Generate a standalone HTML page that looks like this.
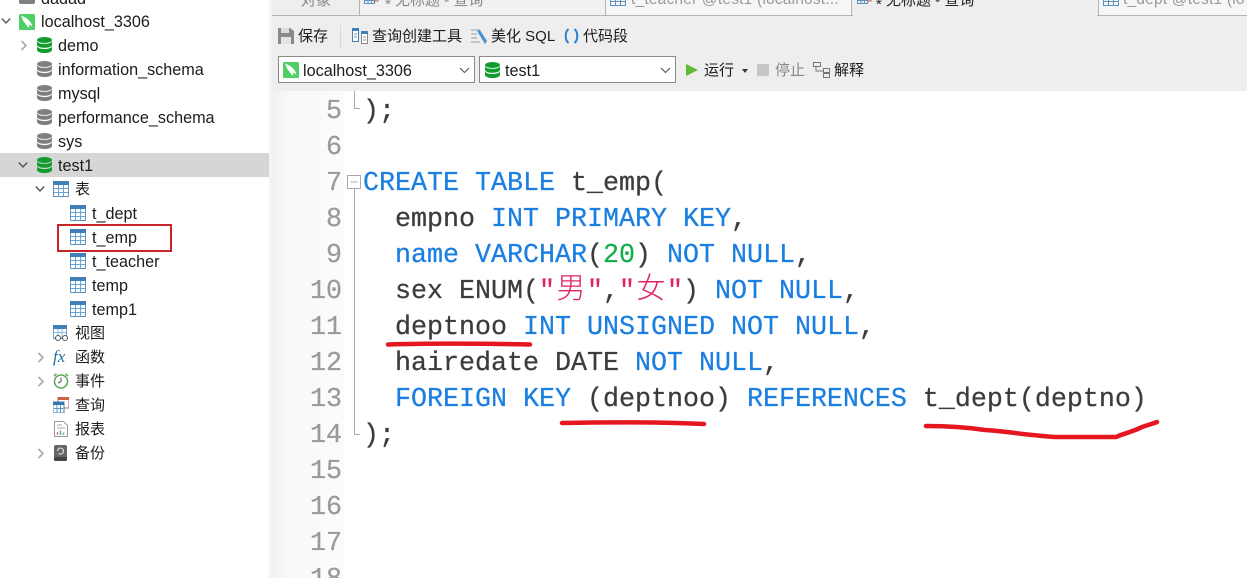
<!DOCTYPE html>
<html lang="zh"><head><meta charset="utf-8"><title>SQL</title>
<style>
html,body{margin:0;padding:0;width:1247px;height:578px;overflow:hidden;background:#fff}
#r{position:relative;width:1247px;height:578px;overflow:hidden;font-family:"Liberation Sans","Noto Sans CJK SC",sans-serif;color:#1c1c1c}
.a,.t,.c,.n,svg.i{position:absolute}
.t{font-size:16.2px;line-height:20px;white-space:nowrap;height:20px}
.z{font-size:15px}
.s{position:relative;top:4px}
.c{left:363px;height:36px;line-height:36px;font-family:"Liberation Mono","Noto Sans CJK SC",monospace;font-size:26.67px;white-space:pre;color:#3c3c3c;-webkit-text-stroke:.25px currentColor}
.c b{font-weight:normal;color:#1a7fe0}
.c i{font-style:normal;color:#e0245e}
.c u{text-decoration:none;color:#12b04c}
.c .k{display:inline-block;width:32px;height:20px;text-align:center;font-size:29px;line-height:20px;vertical-align:baseline;-webkit-text-stroke:0;font-family:"Noto Sans CJK SC",sans-serif;font-weight:300}
.n{left:280px;width:62px;text-align:right;height:36px;line-height:36px;font-family:"Liberation Mono",monospace;font-size:26.67px;color:#9a9a9a;-webkit-text-stroke:.25px #9a9a9a}
.combo{position:absolute;top:56px;height:27px;background:#fff;border:1px solid #8a8a8a;box-sizing:border-box}
</style></head><body><div id="r">
<svg width="0" height="0" style="position:absolute"><defs>
<symbol id="db" viewBox="0 0 15 16"><ellipse cx="7.500" cy="3" rx="7.500" ry="3"/><path d="M0 4.200c1 1.900 3.800 2.600 7.500 2.600S14 6.100 15 4.200V8c-.6 1.800-3.600 2.800-7.500 2.800S.6 9.800 0 8z"/><path d="M0 9.400c1 1.900 3.800 2.600 7.500 2.600s6.500-.7 7.500-2.600V13c-.6 2-3.600 3-7.500 3S.6 15 0 13z"/></symbol>
<symbol id="tb" viewBox="0 0 16 16"><rect x=".5" y=".5" width="15" height="15" fill="#fff" stroke="#5b93c4"/><rect x="0" y="0" width="16" height="4" fill="#3f80b8"/><path d="M5.500 4v11M10.500 4v11M1 7.500h14M1 11.500h14" stroke="#6fa3cf" fill="none"/></symbol>
<symbol id="ms" viewBox="0 0 16 16"><rect width="16" height="16" rx="1.500" fill="#4fd065"/><path d="M2.500 1.500C5 3 8 4 10 6.500c1 1.300 2.500 2.800 3.500 6-1.500-.8-2.700-1.500-3.700-2.200.2 1.500.2 2.500.7 3.700C8 12.500 7 10.500 6 9 4.500 7.500 2.800 5 2.500 1.500z" fill="#fff"/></symbol>
</defs></svg>

<!-- sidebar -->
<div class="a" style="left:269px;top:0;width:3px;height:578px;background:#f4f4f4"></div>
<div class="a" style="left:0;top:153px;width:269px;height:24px;background:#d6d6d6"></div>

<svg class="i" style="left:19px;top:-6px" width="16" height="10" viewBox="0 0 16 10"><rect width="16" height="10" rx="2" fill="#808080"/></svg>
<div class="t" style="left:41px;top:-11px">dadad</div>
<svg class="i" style="left:1px;top:17px" width="10" height="8" viewBox="0 0 10 8"><path d="M.8 1.500 5 6 9.200 1.500" fill="none" stroke="#555" stroke-width="1.300"/></svg>
<svg class="i" style="left:19px;top:14px" width="16" height="16"><use href="#ms"/></svg>
<div class="t" style="left:41px;top:12px">localhost_3306</div>

<svg class="i" style="left:20px;top:40px" width="8" height="11" viewBox="0 0 8 11"><path d="M1.500 1 6 5.500 1.500 10" fill="none" stroke="#aaa" stroke-width="1.600"/></svg>
<svg class="i" style="left:37px;top:37px;fill:#129c2e" width="15" height="16"><use href="#db"/></svg>
<div class="t" style="left:58px;top:36px">demo</div>
<svg class="i" style="left:37px;top:61px;fill:#7f7f7f" width="15" height="16"><use href="#db"/></svg>
<div class="t" style="left:58px;top:60px">information_schema</div>
<svg class="i" style="left:37px;top:85px;fill:#7f7f7f" width="15" height="16"><use href="#db"/></svg>
<div class="t" style="left:58px;top:84px">mysql</div>
<svg class="i" style="left:37px;top:109px;fill:#7f7f7f" width="15" height="16"><use href="#db"/></svg>
<div class="t" style="left:58px;top:108px">performance_schema</div>
<svg class="i" style="left:37px;top:133px;fill:#7f7f7f" width="15" height="16"><use href="#db"/></svg>
<div class="t" style="left:58px;top:132px">sys</div>
<svg class="i" style="left:18px;top:161px" width="10" height="8" viewBox="0 0 10 8"><path d="M.8 1.500 5 6 9.200 1.500" fill="none" stroke="#555" stroke-width="1.400"/></svg>
<svg class="i" style="left:37px;top:157px;fill:#129c2e" width="15" height="16"><use href="#db"/></svg>
<div class="t" style="left:58px;top:156px">test1</div>

<svg class="i" style="left:35px;top:185px" width="10" height="8" viewBox="0 0 10 8"><path d="M.8 1.500 5 6 9.200 1.500" fill="none" stroke="#555" stroke-width="1.400"/></svg>
<svg class="i" style="left:53px;top:181px" width="16" height="16"><use href="#tb"/></svg>
<div class="t z" style="left:75px;top:180px">表</div>

<svg class="i" style="left:70px;top:205px" width="16" height="16"><use href="#tb"/></svg>
<div class="t" style="left:92px;top:204px">t_dept</div>
<svg class="i" style="left:70px;top:229px" width="16" height="16"><use href="#tb"/></svg>
<div class="t" style="left:92px;top:228px">t_emp</div>
<svg class="i" style="left:70px;top:253px" width="16" height="16"><use href="#tb"/></svg>
<div class="t" style="left:92px;top:252px">t_teacher</div>
<svg class="i" style="left:70px;top:277px" width="16" height="16"><use href="#tb"/></svg>
<div class="t" style="left:92px;top:276px">temp</div>
<svg class="i" style="left:70px;top:301px" width="16" height="16"><use href="#tb"/></svg>
<div class="t" style="left:92px;top:300px">temp1</div>
<div class="a" style="left:57px;top:224px;width:115px;height:28px;box-sizing:border-box;border:2px solid #c8242c"></div>

<svg class="i" style="left:53px;top:325px" width="16" height="16" viewBox="0 0 16 16"><rect x=".5" y=".5" width="13" height="13" fill="#fff" stroke="#6fa3cf"/><rect width="14" height="4" fill="#3f80b8"/><path d="M5 4v9M9 4v9M1 7.500h12" stroke="#8db8da"/><circle cx="5" cy="13" r="2.500" fill="#fff" stroke="#555"/><circle cx="12" cy="13" r="2.500" fill="#fff" stroke="#555"/></svg>
<div class="t z" style="left:75px;top:324px">视图</div>

<svg class="i" style="left:37px;top:352px" width="8" height="11" viewBox="0 0 8 11"><path d="M1.500 1 6 5.500 1.500 10" fill="none" stroke="#aaa" stroke-width="1.600"/></svg>
<div class="a" style="left:53px;top:346px;font:italic 17px/22px 'Liberation Serif',serif;color:#2a6f9f;white-space:nowrap">fx</div>
<div class="t z" style="left:75px;top:348px">函数</div>

<svg class="i" style="left:37px;top:376px" width="8" height="11" viewBox="0 0 8 11"><path d="M1.500 1 6 5.500 1.500 10" fill="none" stroke="#aaa" stroke-width="1.600"/></svg>
<svg class="i" style="left:53px;top:373px" width="16" height="16" viewBox="0 0 16 16"><circle cx="8" cy="8.500" r="6.500" fill="#fff" stroke="#5fa55a" stroke-width="1.500"/><path d="M8 4.500v4l-3 1.500" fill="none" stroke="#555"/><path d="M1 3 3.500.8M15 3 12.500.8" stroke="#5fa55a" stroke-width="1.500"/></svg>
<div class="t z" style="left:75px;top:372px">事件</div>

<svg class="i" style="left:53px;top:397px" width="16" height="16" viewBox="0 0 16 16"><rect x="5" y="0" width="11" height="11" fill="#fff" stroke="#c8624a"/><rect x="5" width="11" height="3" fill="#c8624a"/><rect x="0" y="5" width="11" height="11" fill="#fff" stroke="#3f80b8"/><rect y="5" width="11" height="3" fill="#2f76b0"/><path d="M4 8v8M7.500 8v8M1 11.500h9" stroke="#5b93c4"/></svg>
<div class="t z" style="left:75px;top:396px">查询</div>

<svg class="i" style="left:54px;top:421px" width="14" height="16" viewBox="0 0 14 16"><path d="M.5.500h9l4 4v11H.5z" fill="#fff" stroke="#999"/><path d="M3 4h5M3 7h8" stroke="#aaa"/><path d="M3.500 14v-3" stroke="#d77" stroke-width="1.500"/><path d="M6.500 14V9.500" stroke="#6a9fd0" stroke-width="1.500"/><path d="M9.500 14v-2.500" stroke="#7b7" stroke-width="1.500"/></svg>
<div class="t z" style="left:75px;top:420px">报表</div>

<svg class="i" style="left:37px;top:448px" width="8" height="11" viewBox="0 0 8 11"><path d="M1.500 1 6 5.500 1.500 10" fill="none" stroke="#aaa" stroke-width="1.600"/></svg>
<svg class="i" style="left:54px;top:445px" width="13" height="16" viewBox="0 0 13 16"><rect width="13" height="16" rx="2" fill="#666"/><rect y="12" width="13" height="4" rx="1.500" fill="#444"/><path d="M3.500 6a3 3 0 1 1 1 2.300" fill="none" stroke="#ddd" stroke-width="1.200"/></svg>
<div class="t z" style="left:75px;top:444px">备份</div>

<!-- toolbar -->
<div class="a" style="left:272px;top:0;width:975px;height:91px;background:#eeeeee"></div>
<div class="a" style="left:272px;top:15px;width:975px;height:1px;background:#b4b4b4"></div>
<div class="a" style="left:359px;top:-2px;width:246px;height:17px;background:#f1f1f1;border-left:1px solid #b4b4b4"></div>
<div class="a" style="left:605px;top:-2px;width:247px;height:18px;box-sizing:border-box;background:#f6f6f6;border:1px solid #b4b4b4"></div>
<div class="a" style="left:853px;top:0;width:244px;height:16px;background:#eeeeee"></div>
<div class="a" style="left:1098px;top:-2px;width:149px;height:18px;box-sizing:border-box;background:#f6f6f6;border:1px solid #b4b4b4;border-right:0"></div>
<div class="t z" style="left:301px;top:-9px;color:#888">对象</div>
<svg class="i" style="left:364px;top:-3px" width="16" height="10" viewBox="0 0 16 10"><path d="M.5 0v6.500h10V0M4 0v6M7.500 0v6M.5 3.500h10" fill="none" stroke="#5b93c4"/><rect x="11" y="0" width="3" height="4" fill="none" stroke="#c8624a"/></svg>
<div class="t z" style="left:385px;top:-9px;color:#888"><span class="s">*</span> 无标题 - 查询</div>
<svg class="i" style="left:610px;top:-3px" width="16" height="10" viewBox="0 0 16 10"><path d="M.5 0v8.500h15V0M5.500 0v8M10.500 0v8M.5 4.500h15" fill="none" stroke="#5b93c4"/></svg>
<div class="t" style="left:631px;top:-10px;color:#999;font-size:15.500px;letter-spacing:.2px">t_teacher @test1 (localhost...</div>
<svg class="i" style="left:857px;top:-3px" width="16" height="10" viewBox="0 0 16 10"><path d="M.5 0v6.500h10V0M4 0v6M7.500 0v6M.5 3.500h10" fill="none" stroke="#5b93c4"/><rect x="11" y="0" width="3" height="4" fill="none" stroke="#c8624a"/></svg>
<div class="t z" style="left:876px;top:-9px;color:#222"><span class="s">*</span> 无标题 - 查询</div>
<svg class="i" style="left:1103px;top:-3px" width="16" height="10" viewBox="0 0 16 10"><path d="M.5 0v8.500h15V0M5.500 0v8M10.500 0v8M.5 4.500h15" fill="none" stroke="#5b93c4"/></svg>
<div class="t" style="left:1123px;top:-10px;color:#999;font-size:15.500px;letter-spacing:.2px">t_dept @test1 (lo</div>

<!-- toolbar row -->
<svg class="i" style="left:278px;top:28px" width="16" height="16" viewBox="0 0 16 16"><path d="M0 0h12l4 3v13H0z" fill="#8a8a8a"/><rect x="3" y="0" width="8" height="5" fill="#ddd"/><rect x="3" y="9" width="10" height="7" fill="#e4e4e4"/></svg>
<div class="t z" style="left:298px;top:27px">保存</div>
<div class="a" style="left:340px;top:25px;width:1px;height:23px;background:#d8d8d8"></div>
<svg class="i" style="left:352px;top:28px" width="16" height="16" viewBox="0 0 16 16"><rect x=".5" y=".5" width="6" height="13" fill="#fff" stroke="#3f80b8"/><rect width="7" height="3" fill="#3f80b8"/><rect x="9.500" y="3.500" width="6" height="12" fill="#fff" stroke="#888"/><rect x="9" y="3" width="7" height="3" fill="#3f80b8"/><path d="M2 6h3M2 9h3M11 9h3M11 12h3" stroke="#888"/></svg>
<div class="t z" style="left:372px;top:27px">查询创建工具</div>
<svg class="i" style="left:471px;top:28px" width="17" height="17" viewBox="0 0 17 17"><path d="M0 2h9M0 6h6M0 10h6M0 14h9" stroke="#aaa" stroke-width="1.200"/><path d="M6 3l3-1 7 11-2 3z" fill="#4f93cf"/></svg>
<div class="t z" style="left:491px;top:27px">美化 SQL</div>
<svg class="i" style="left:564px;top:28px" width="15" height="16" viewBox="0 0 15 16"><path d="M4.500 1C.8 4 .8 12 4.500 15M10.500 1c3.700 3 3.700 11 0 14" fill="none" stroke="#2a7fd6" stroke-width="2"/></svg>
<div class="t z" style="left:583px;top:27px">代码段</div>

<div class="combo" style="left:278px;width:197px"></div>
<svg class="i" style="left:283px;top:62px" width="16" height="16"><use href="#ms"/></svg>
<div class="t" style="left:303px;top:61px">localhost_3306</div>
<svg class="i" style="left:459px;top:67px" width="11" height="7" viewBox="0 0 11 7"><path d="M1 1l4.500 4.500L10 1" fill="none" stroke="#555" stroke-width="1.100"/></svg>
<div class="combo" style="left:479px;width:197px"></div>
<svg class="i" style="left:485px;top:62px;fill:#129c2e" width="15" height="16"><use href="#db"/></svg>
<div class="t" style="left:505px;top:61px">test1</div>
<svg class="i" style="left:660px;top:67px" width="11" height="7" viewBox="0 0 11 7"><path d="M1 1l4.500 4.500L10 1" fill="none" stroke="#555" stroke-width="1.100"/></svg>

<svg class="i" style="left:686px;top:63px" width="13" height="14" viewBox="0 0 13 14"><path d="M0 1v12l12-6z" fill="#62b832"/></svg>
<div class="t z" style="left:704px;top:61px">运行</div>
<svg class="i" style="left:742px;top:69px" width="6" height="4" viewBox="0 0 6 4"><path d="M0 0h6L3 4z" fill="#333"/></svg>
<div class="a" style="left:757px;top:64px;width:12px;height:12px;background:#c6c6c6"></div>
<div class="t z" style="left:775px;top:61px;color:#888">停止</div>
<svg class="i" style="left:813px;top:62px" width="18" height="16" viewBox="0 0 18 16"><path d="M.5.500h7v4h-7zM10.500 6.500h6v4h-6zM10.500 11.500h6v4h-6zM3 5v4h7" fill="none" stroke="#777"/></svg>
<div class="t z" style="left:834px;top:61px">解释</div>

<!-- editor -->
<div class="a" style="left:272px;top:91px;width:72px;height:487px;background:linear-gradient(90deg,#f2f2f2 0,#fafafa 30%,#fbfbfb 100%)"></div>

<div class="n" style="top:94px">5</div>
<div class="n" style="top:130px">6</div>
<div class="n" style="top:166px">7</div>
<div class="n" style="top:202px">8</div>
<div class="n" style="top:238px">9</div>
<div class="n" style="top:274px">10</div>
<div class="n" style="top:310px">11</div>
<div class="n" style="top:346px">12</div>
<div class="n" style="top:382px">13</div>
<div class="n" style="top:418px">14</div>
<div class="n" style="top:454px">15</div>
<div class="n" style="top:490px">16</div>
<div class="n" style="top:526px">17</div>
<div class="n" style="top:562px">18</div>

<svg class="i" style="left:345px;top:91px" width="20" height="360" viewBox="0 0 20 360"><path d="M9.500 0v17.500H15" fill="none" stroke="#a8a8a8"/><rect x="2.500" y="84.500" width="13" height="13" fill="#fff" stroke="#a8a8a8"/><path d="M5.500 91h7M9.500 98v245.500H15" fill="none" stroke="#a8a8a8"/></svg>

<div class="c" style="top:94px">);</div>
<div class="c" style="top:166px"><b>CREATE</b> <b>TABLE</b> t_emp(</div>
<div class="c" style="top:202px">  empno <b>INT</b> <b>PRIMARY</b> <b>KEY</b>,</div>
<div class="c" style="top:238px">  <b>name</b> <b>VARCHAR</b>(<u>20</u>) <b>NOT</b> <b>NULL</b>,</div>
<div class="c" style="top:274px">  sex ENUM(<i>"<span class="k">男</span>"</i>,<i>"<span class="k">女</span>"</i>) <b>NOT</b> <b>NULL</b>,</div>
<div class="c" style="top:310px">  deptnoo <b>INT</b> <b>UNSIGNED</b> <b>NOT</b> <b>NULL</b>,</div>
<div class="c" style="top:346px">  hairedate DATE <b>NOT</b> <b>NULL</b>,</div>
<div class="c" style="top:382px">  <b>FOREIGN</b> <b>KEY</b> (deptnoo) <b>REFERENCES</b> t_dept(deptno)</div>
<div class="c" style="top:418px">);</div>

<!-- annotations -->
<svg class="i" style="left:0;top:0" width="1247" height="578" viewBox="0 0 1247 578">
<path d="M388 344.500C420 343.500 480 343.500 530 344.500" fill="none" stroke="#e5161f" stroke-width="4.500" stroke-linecap="round"/>
<path d="M562 423C610 422 660 422 704 424" fill="none" stroke="#e5161f" stroke-width="4.500" stroke-linecap="round"/>
<path d="M926 426C945 426 965 427 985 430C1005 431 1025 435 1055 437C1075 437 1095 437 1116 437C1125 433 1135 431 1142 427C1148 425 1152 424 1157 422" fill="none" stroke="#e5161f" stroke-width="4.500" stroke-linecap="round"/>
</svg>
</div></body></html>
